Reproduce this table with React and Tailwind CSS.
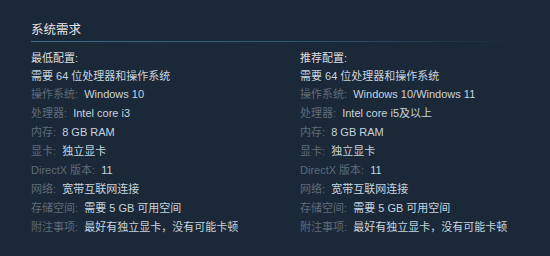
import React from "react";

const left = [
  ["操作系统:", "Windows 10"],
  ["处理器:", "Intel core i3"],
  ["内存:", "8 GB RAM"],
  ["显卡:", "独立显卡"],
  ["DirectX 版本:", "11"],
  ["网络:", "宽带互联网连接"],
  ["存储空间:", "需要 5 GB 可用空间"],
  ["附注事项:", "最好有独立显卡，没有可能卡顿"],
];
const right = [
  ["操作系统:", "Windows 10/Windows 11"],
  ["处理器:", "Intel core i5及以上"],
  ["内存:", "8 GB RAM"],
  ["显卡:", "独立显卡"],
  ["DirectX 版本:", "11"],
  ["网络:", "宽带互联网连接"],
  ["存储空间:", "需要 5 GB 可用空间"],
  ["附注事项:", "最好有独立显卡，没有可能卡顿"],
];

function Col({ title, rows, className }) {
  return (
    <div className={className}>
      <div className="h-[18px] leading-[18px] text-[#dcdedf]">{title}</div>
      <div className="h-[18px] leading-[18px] text-[#c6d4df]">需要 64 位处理器和操作系统</div>
      <ul className="flex flex-col">
        {rows.map(([k, v], i) => (
          <li key={i} className="h-[19px] leading-[19px] whitespace-nowrap">
            <span className="text-[#5f6b76]">{k}</span>
            <span className="text-[#c6d4df]">&nbsp; {v}</span>
          </li>
        ))}
      </ul>
    </div>
  );
}

export default function App() {
  return (
    <div
      className="w-[550px] h-[256px] bg-[#1b2838] overflow-hidden"
      style={{ fontFamily: '"Liberation Sans", "Noto Sans CJK SC", sans-serif' }}
    >
      <div className="pl-[31px] pr-[30px] pt-[21px]">
        <div className="text-[12.5px] leading-[19px] text-[#e5e5e5]">系统需求</div>
        <div className="mt-[1px] h-[1px] bg-gradient-to-r from-[#3a6c8a] via-[#2f5a75] to-transparent" />
        <div className="flex pt-[7px] text-[11px]">
          <Col title="最低配置:" rows={left} className="w-[269px] shrink-0" />
          <Col title="推荐配置:" rows={right} className="flex-1" />
        </div>
      </div>
    </div>
  );
}
